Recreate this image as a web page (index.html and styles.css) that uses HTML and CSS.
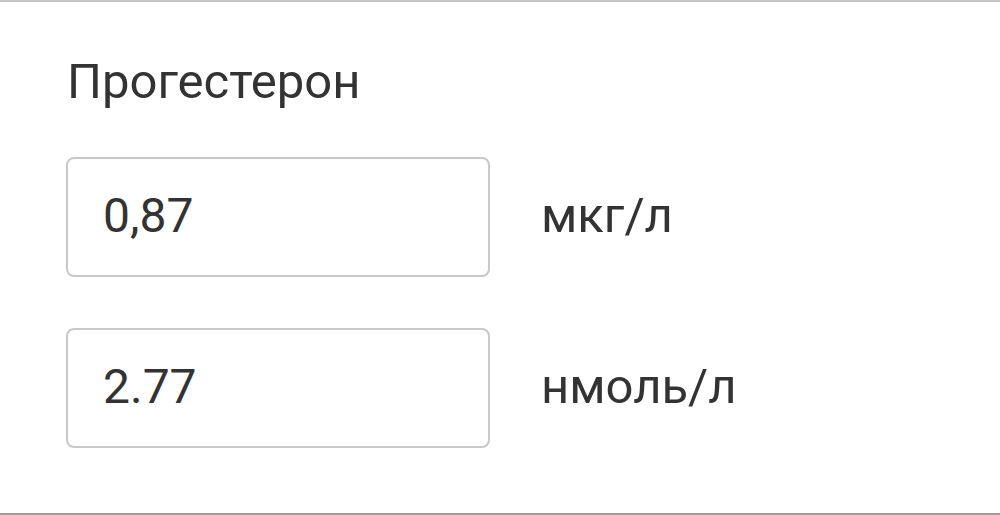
FILE: index.html
```html
<!DOCTYPE html>
<html lang="ru">
<head>
<meta charset="utf-8">
<link rel="stylesheet" href="styles.css">
</head>
<body>
<section class="card">
  <h2 class="title">Прогестерон</h2>
  <div class="row">
    <div class="field">0,87</div>
    <span class="unit">мкг/л</span>
  </div>
  <div class="row">
    <div class="field">2.77</div>
    <span class="unit">нмоль/л</span>
  </div>
</section>
</body>
</html>
```
FILE: styles.css
```css
html, body {
  margin: 0;
  padding: 0;
  background: #fff;
}
body {
  width: 1000px;
  height: 515px;
  overflow: hidden;
  font-family: Roboto, "Noto Sans", sans-serif;
  color: #333;
}
.card {
  box-sizing: border-box;
  height: 515px;
  border-top: 2px solid #c4c4c4;
  border-bottom: 2px solid #9e9e9e;
  padding: 52px 0 0 66px;
  display: flex;
  flex-direction: column;
  gap: 51px;
}
.title {
  margin: 0 0 -4px 1px;
  font-weight: 400;
  font-size: 49px;
  line-height: 56px;
  color: #333;
}
.row {
  display: flex;
  align-items: center;
  gap: 51px;
}
.field {
  box-sizing: border-box;
  width: 424px;
  height: 120px;
  border: 2px solid #c8c8c8;
  border-radius: 8px;
  padding: 0 0 4px 35px;
  display: flex;
  align-items: center;
  font-size: 48px;
  color: #333;
}
.unit {
  font-size: 49px;
  color: #333;
  padding-bottom: 4px;
}
```
